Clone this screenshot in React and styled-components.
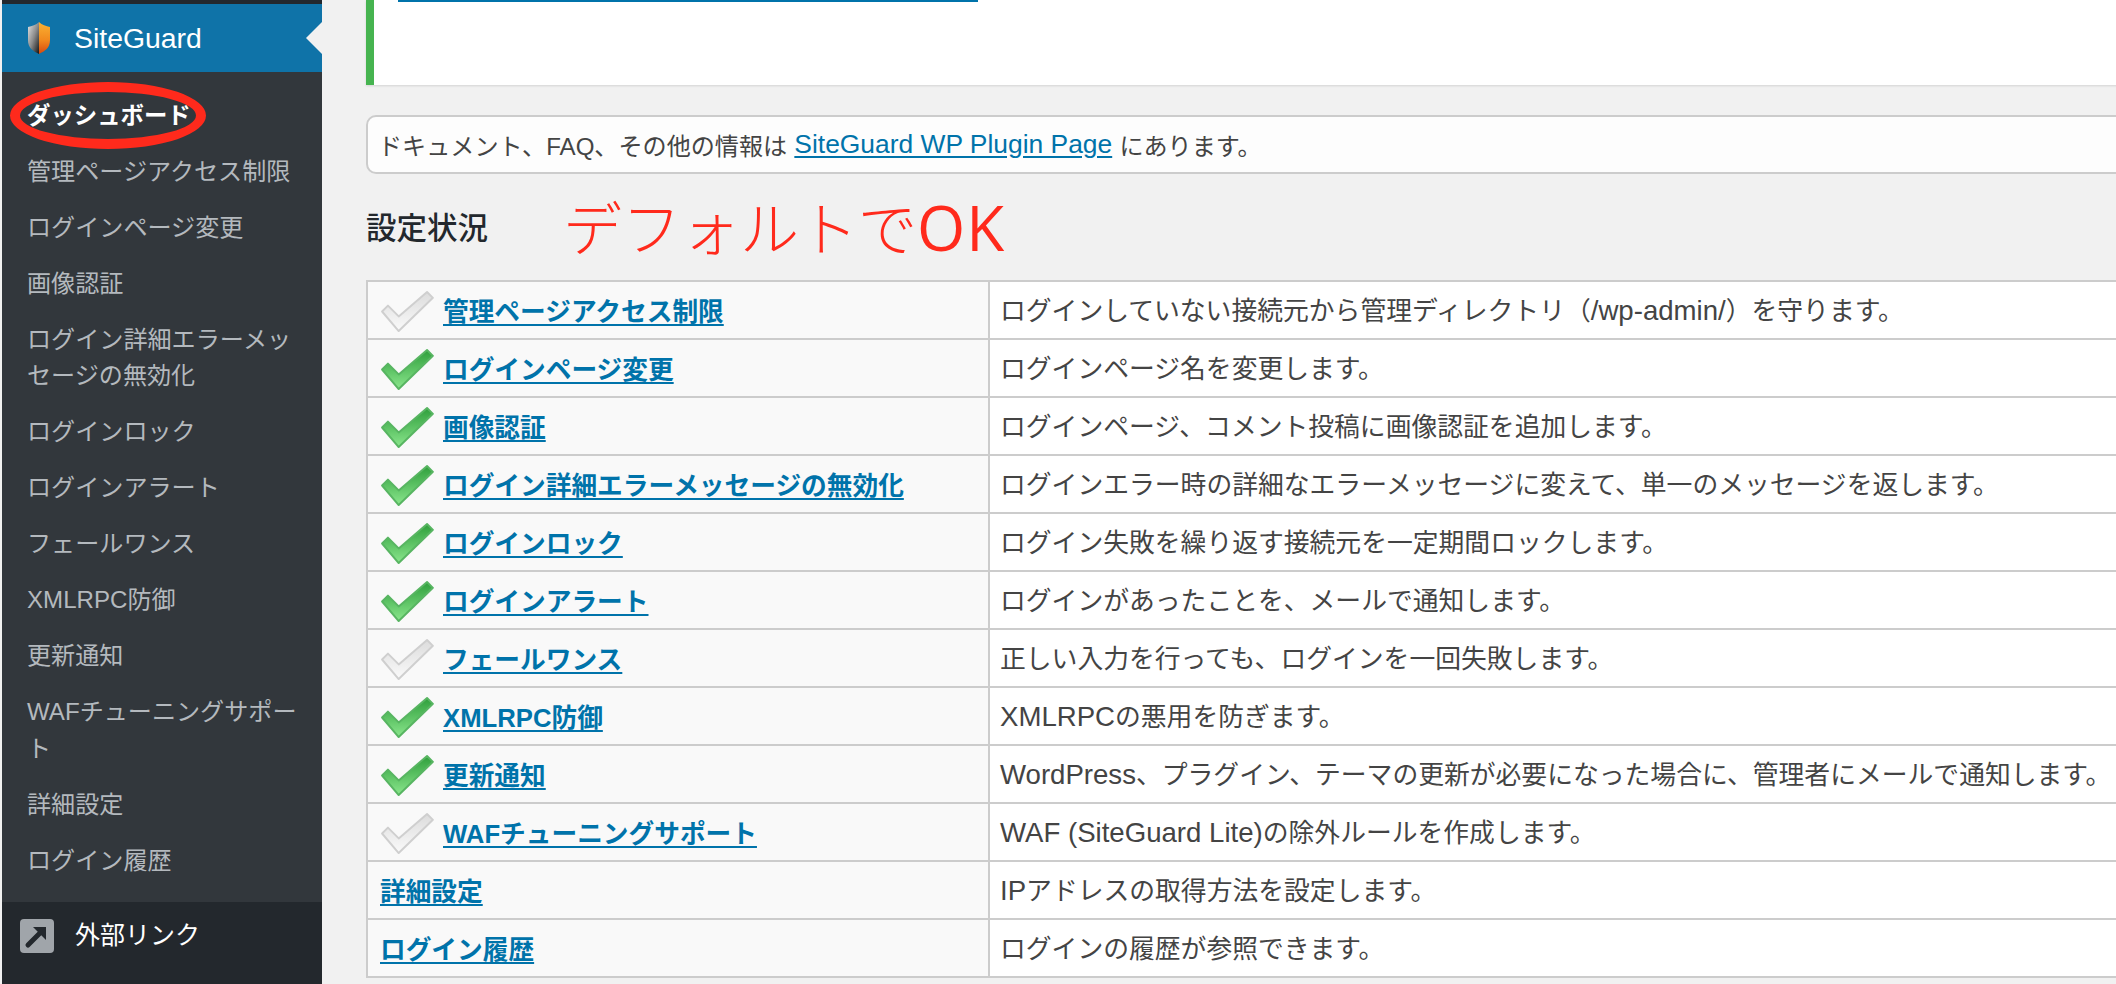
import React from 'react'
import styled, { createGlobalStyle } from 'styled-components'

const FONT = '"Liberation Sans", "Noto Sans CJK JP", sans-serif'

const GlobalStyle = createGlobalStyle`
    html, body {
        margin: 0;
        padding: 0;
        height: 100%;
        overflow: hidden;
        background: #f1f1f1;
    }
    body {
        font-family: ${FONT};
    }
`

const Latin = styled.span`
    font-size: 27.6px;
`

const menuItems = [
    { label: 'ダッシュボード', current: true },
    { label: '管理ページアクセス制限' },
    { label: 'ログインページ変更' },
    { label: '画像認証' },
    { label: 'ログイン詳細エラーメッセージの無効化' },
    { label: 'ログインロック' },
    { label: 'ログインアラート' },
    { label: 'フェールワンス' },
    { label: 'XMLRPC防御' },
    { label: '更新通知' },
    { label: 'WAFチューニングサポート' },
    { label: '詳細設定' },
    { label: 'ログイン履歴' },
]

const rows = [
    { name: '管理ページアクセス制限', check: 'off', text: <>ログインしていない接続元から管理ディレクトリ（<Latin>/wp-admin/</Latin>）を守ります。</> },
    { name: 'ログインページ変更', check: 'on', text: 'ログインページ名を変更します。' },
    { name: '画像認証', check: 'on', text: 'ログインページ、コメント投稿に画像認証を追加します。' },
    { name: 'ログイン詳細エラーメッセージの無効化', check: 'on', text: 'ログインエラー時の詳細なエラーメッセージに変えて、単一のメッセージを返します。' },
    { name: 'ログインロック', check: 'on', text: 'ログイン失敗を繰り返す接続元を一定期間ロックします。' },
    { name: 'ログインアラート', check: 'on', text: 'ログインがあったことを、メールで通知します。' },
    { name: 'フェールワンス', check: 'off', text: '正しい入力を行っても、ログインを一回失敗します。' },
    { name: 'XMLRPC防御', check: 'on', text: <><Latin>XMLRPC</Latin>の悪用を防ぎます。</> },
    { name: '更新通知', check: 'on', text: <><Latin>WordPress</Latin>、プラグイン、テーマの更新が必要になった場合に、管理者にメールで通知します。</> },
    { name: 'WAFチューニングサポート', check: 'off', text: <><Latin>WAF (SiteGuard Lite)</Latin>の除外ルールを作成します。</> },
    { name: '詳細設定', text: <><Latin>IP</Latin>アドレスの取得方法を設定します。</> },
    { name: 'ログイン履歴', text: 'ログインの履歴が参照できます。' },
]

const ShieldIcon = () => (
    <ShieldSvg width="24" height="32" viewBox="0 0 24 32">
        <defs>
            <linearGradient id="shieldLeft" x1="0" y1="0" x2="1" y2="1">
                <stop offset="0" stopColor="#e4e4e4" />
                <stop offset="0.5" stopColor="#8c8c8c" />
                <stop offset="1" stopColor="#141414" />
            </linearGradient>
            <linearGradient id="shieldRight" x1="0" y1="0" x2="0" y2="1">
                <stop offset="0" stopColor="#f9b233" />
                <stop offset="0.55" stopColor="#f28a1e" />
                <stop offset="1" stopColor="#d8480f" />
            </linearGradient>
        </defs>
        <path d="M12 0 L12 32 C6 29 1 26 1 18 L1 5 C5 4 9 3 12 0 Z" fill="url(#shieldLeft)" />
        <path d="M12 0 C15 3 19 4 23 5 L23 18 C23 26 18 29 12 32 Z" fill="url(#shieldRight)" />
    </ShieldSvg>
)

const ExternalIcon = () => (
    <svg width="34" height="34" viewBox="0 0 34 34">
        <rect width="34" height="34" rx="4" fill="#a0a5aa" />
        <path d="M8 26 L22 12" stroke="#23282d" strokeWidth="5" strokeLinecap="round" />
        <path d="M13 8 H26 V21 Z" fill="#23282d" />
    </svg>
)

const CheckIcon = ({ on, id }) => (
    <CheckSvg width="55" height="43" viewBox="-1 -1 56 44">
        <defs>
            <linearGradient id={id} x1="0" y1="0" x2="0" y2="1">
                <stop offset="0" stopColor={on ? '#2f9f3c' : '#dcdcdc'} />
                <stop offset="1" stopColor={on ? '#8ae68c' : '#fafafa'} />
            </linearGradient>
        </defs>
        <path
            d="M1 21 L7 15 L18 26 L47 1 L53 7 L18 41 Z"
            fill={`url(#${id})`}
            stroke={on ? '#58b562' : '#cfcfcf'}
            strokeWidth="2"
            strokeLinejoin="round"
        />
    </CheckSvg>
)

const App = () => {
    return (
        <Page>
            <GlobalStyle />
            <Sidebar>
                <TopEdge />
                <CurrentPlugin>
                    <ShieldIcon />
                    <PluginName>SiteGuard</PluginName>
                    <Pointer />
                </CurrentPlugin>
                <SubMenu>
                    {menuItems.map((item) => (
                        <MenuItem key={item.label} $current={item.current}>
                            {item.label}
                            {item.current && <RedCircle />}
                        </MenuItem>
                    ))}
                </SubMenu>
                <ExternalRow>
                    <ExternalIcon />
                    <PluginName>外部リンク</PluginName>
                </ExternalRow>
            </Sidebar>
            <Content>
                <Notice>
                    <NoticeLink />
                </Notice>
                <InfoBox>
                    ドキュメント、FAQ、その他の情報は <InfoLink href="#">SiteGuard WP Plugin Page</InfoLink> にあります。
                </InfoBox>
                <HeadingRow>
                    <Title>設定状況</Title>
                    <Annotation>デフォルトで<AnnotationLatin>OK</AnnotationLatin></Annotation>
                </HeadingRow>
                <StatusTable>
                    <tbody>
                        {rows.map((row, i) => (
                            <tr key={row.name}>
                                <NameCell>
                                    <NameWrap>
                                        {row.check && <CheckIcon on={row.check === 'on'} id={`check${i}`} />}
                                        <NameLink href="#">{row.name}</NameLink>
                                    </NameWrap>
                                </NameCell>
                                <TextCell>{row.text}</TextCell>
                            </tr>
                        ))}
                    </tbody>
                </StatusTable>
            </Content>
        </Page>
    )
}

const Page = styled.div`
    display: flex;
    width: 2116px;
    height: 984px;
    overflow: hidden;
    background: #f1f1f1;
`

const Sidebar = styled.nav`
    display: flex;
    flex-direction: column;
    flex: none;
    width: 320px;
    margin-left: 2px;
    background: #32373c;
`

const TopEdge = styled.div`
    height: 4px;
    background: #23282d;
`

const CurrentPlugin = styled.div`
    position: relative;
    display: flex;
    align-items: center;
    gap: 23px;
    height: 68px;
    padding-left: 25px;
    background: #0f73a8;
`

const ShieldSvg = styled.svg`
    flex: none;
    filter: blur(0.6px);
`

const PluginName = styled.span`
    color: #fff;
    font-size: 28.4px;
    line-height: 1;
`

const Pointer = styled.span`
    position: absolute;
    right: 0;
    top: 18px;
    border: 16px solid transparent;
    border-left-width: 0;
    border-right-color: #f1f1f1;
`

const SubMenu = styled.div`
    display: flex;
    flex-direction: column;
    height: 830px;
    padding-top: 16px;
    box-sizing: border-box;
`

const MenuItem = styled.div`
    position: relative;
    padding: 9.5px 24px 10px 25px;
    font-size: ${(props) => (props.$current ? '23.4px' : '24.1px')};
    line-height: 36.5px;
    font-weight: ${(props) => (props.$current ? 700 : 400)};
    color: ${(props) => (props.$current ? '#fff' : '#b4b9be')};
`

const RedCircle = styled.span`
    position: absolute;
    left: 8px;
    top: -6px;
    width: 196px;
    height: 67px;
    box-sizing: border-box;
    border: 10px solid #ff2a1c;
    border-radius: 50%;
`

const ExternalRow = styled.div`
    flex: 1;
    display: flex;
    align-items: flex-start;
    gap: 21px;
    padding: 17px 0 0 18px;
    background: #23282d;
    ${PluginName} {
        font-size: 25px;
        line-height: 32px;
    }
`

const Content = styled.main`
    flex: none;
    width: 1900px;
    padding-left: 44px;
`

const Notice = styled.div`
    height: 85px;
    padding-left: 24px;
    background: #fff;
    border-left: 8px solid #46b450;
    box-shadow: 0 1px 2px rgba(0, 0, 0, 0.12);
`

const NoticeLink = styled.div`
    width: 580px;
    height: 2px;
    background: #0073aa;
`

const InfoBox = styled.div`
    display: flex;
    align-items: center;
    gap: 0.3em;
    height: 59px;
    margin-top: 30px;
    padding-left: 10px;
    box-sizing: border-box;
    border: 2px solid #cccccc;
    border-radius: 10px;
    background: #fdfdfd;
    color: #444;
    font-size: 24.1px;
`

const Link = styled.a`
    color: #0073aa;
    text-decoration: underline;
    text-underline-offset: 3px;
`

const InfoLink = styled(Link)`
    font-size: 26.4px;
`

const HeadingRow = styled.div`
    display: flex;
    align-items: center;
    gap: 75px;
    height: 106px;
`

const Title = styled.h2`
    margin: 0 0 3px;
    color: #23282d;
    font-size: 30.5px;
    font-weight: 500;
`

const Annotation = styled.span`
    margin-top: 3px;
    color: #ff2a1c;
    font-size: 59px;
    font-weight: 300;
    line-height: 1;
`

const AnnotationLatin = styled.span`
    font-family: "Open Sans", sans-serif;
    font-size: 62px;
    font-weight: 400;
    letter-spacing: 1px;
`

const StatusTable = styled.table`
    width: 1800px;
    table-layout: fixed;
    border-collapse: collapse;
    border: 2px solid #cccccc;
    background: #fff;
`

const NameCell = styled.td`
    width: 622px;
    height: 58px;
    padding: 0 0 0 12px;
    box-sizing: border-box;
    border: 2px solid #cccccc;
    background: #f9f9f9;
`

const NameWrap = styled.div`
    display: flex;
    align-items: center;
    gap: 8px;
`

const CheckSvg = styled.svg`
    flex: none;
    margin: 2px 0 0 0;
    filter: blur(0.5px);
`

const NameLink = styled(Link)`
    margin-top: -2px;
    font-size: 25.7px;
    font-weight: 700;
`

const TextCell = styled.td`
    height: 58px;
    padding: 0 0 3px 10px;
    box-sizing: border-box;
    border: 2px solid #cccccc;
    color: #444;
    font-size: 25.8px;
    white-space: nowrap;
`

export default App
